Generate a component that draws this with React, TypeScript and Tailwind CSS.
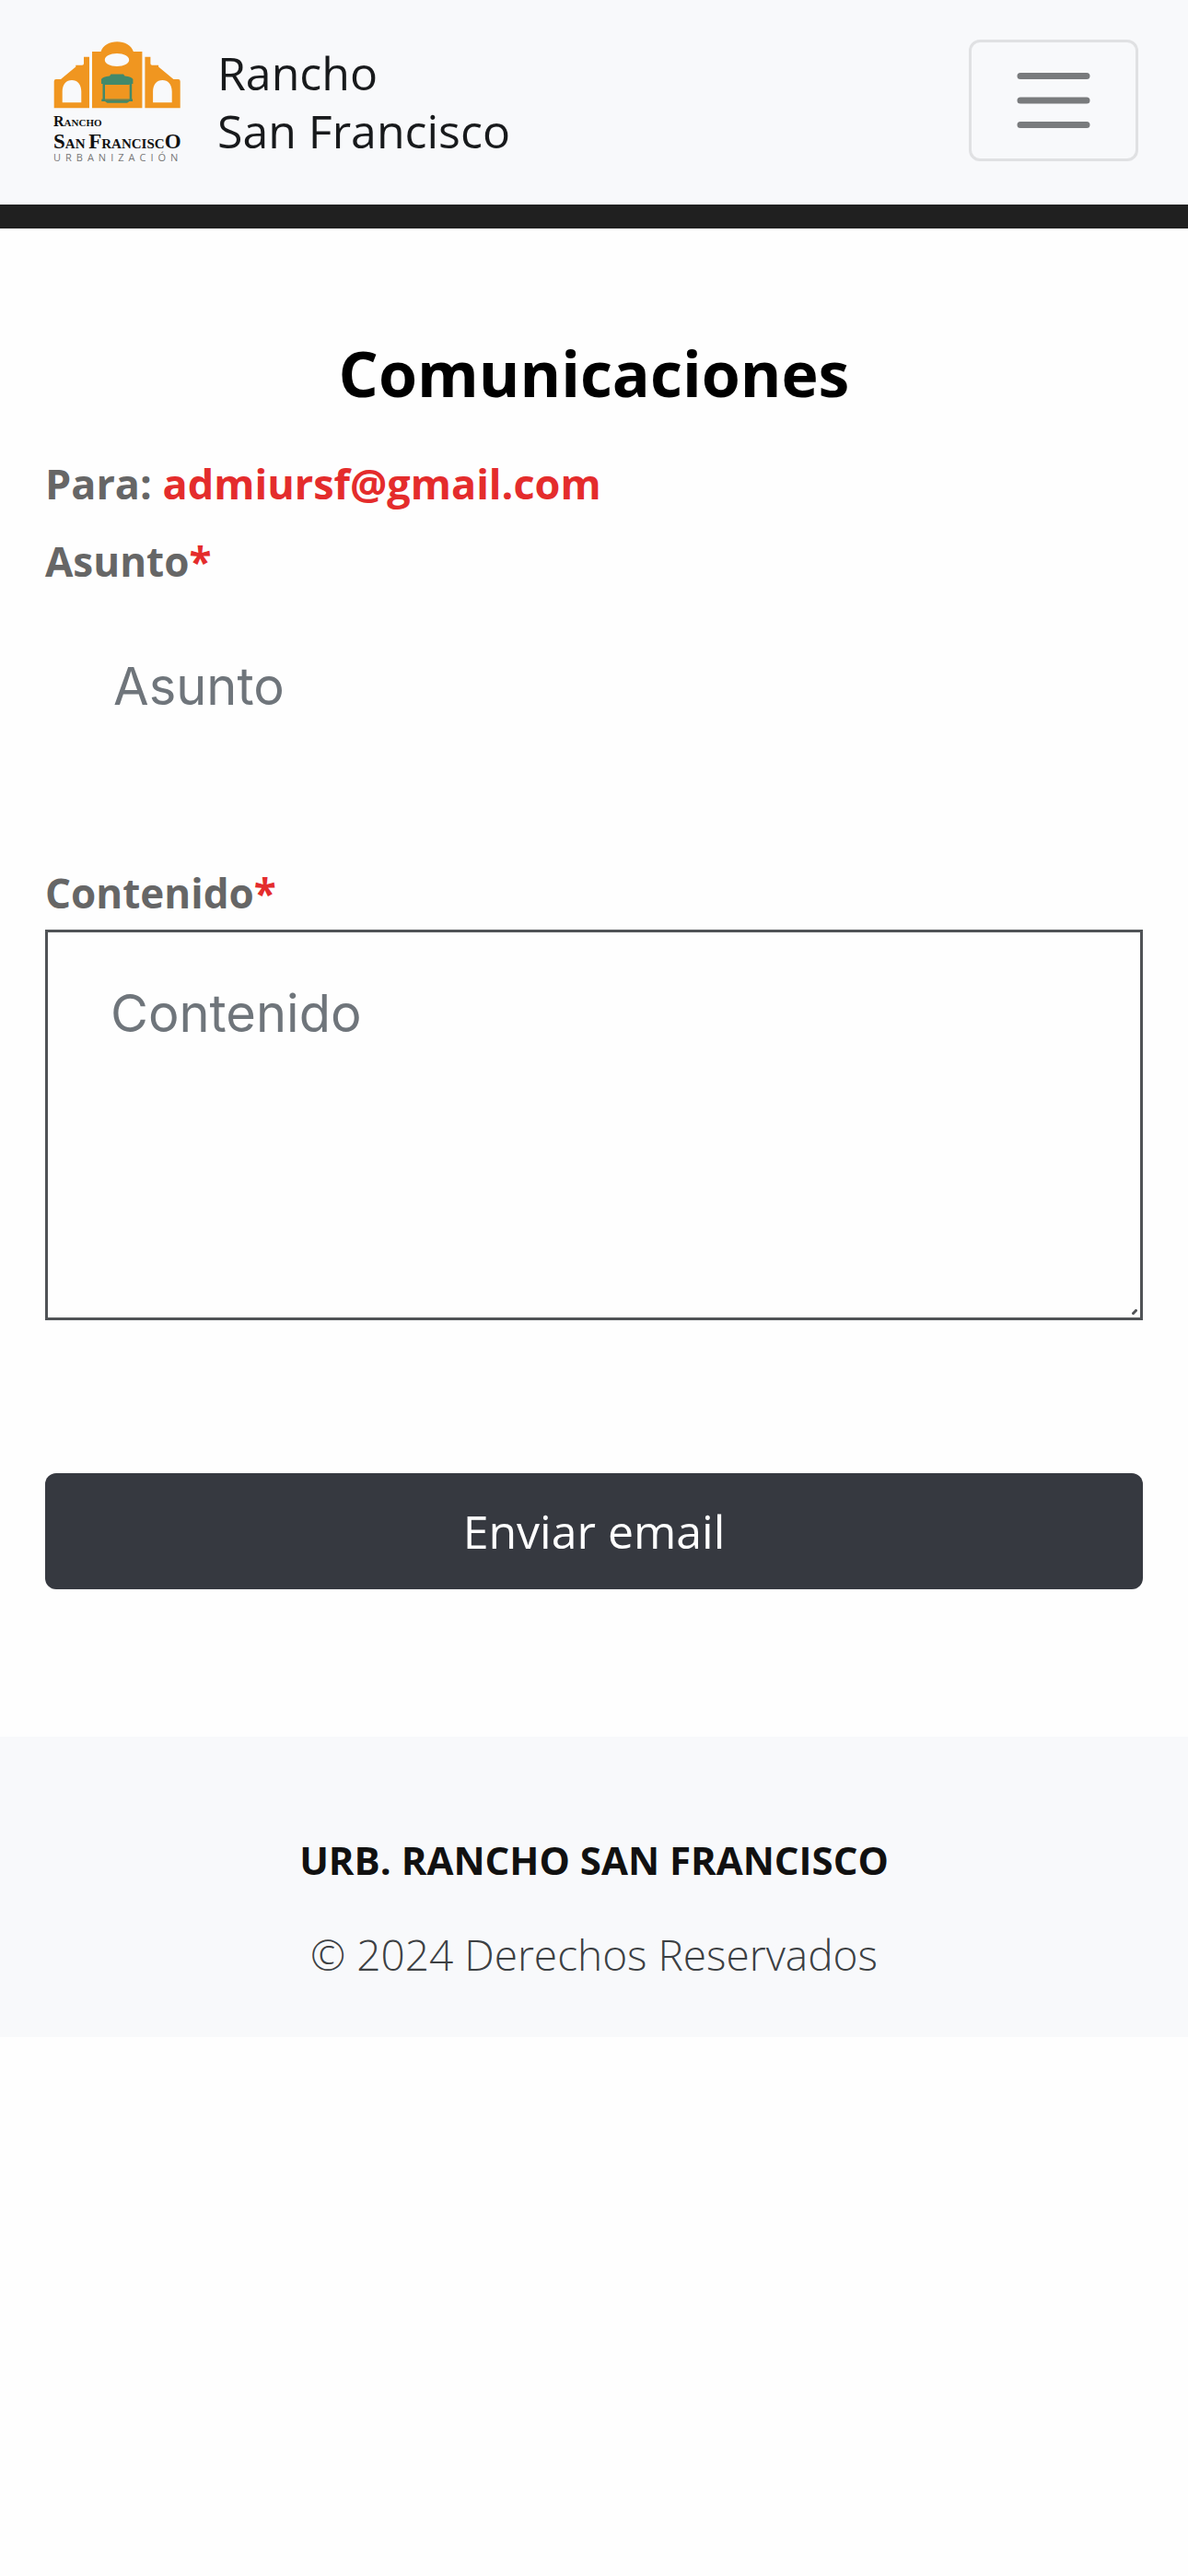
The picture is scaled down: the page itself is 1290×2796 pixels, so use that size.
function GateWing() {
  return (
    <path
      fillRule="evenodd"
      d="M0.7 72.3V43.2Q0.7 41 2.9 41H8L24.3 27.5V25.7H31.2Q33 25.7 33 23.9V16.7H39V72.3ZM9.7 66.3H30.3V54.5C30.3 46.5 26 42 20 42S9.7 46.5 9.7 54.5Z"
    />
  );
}

function Logo() {
  return (
    <svg
      viewBox="0 0 138 132"
      className="h-[132px] w-[138px] shrink-0 overflow-visible"
      role="img"
      aria-label="Rancho San Francisco Urbanización"
    >
      <g fill="#f09620">
        <GateWing />
        <g transform="translate(138.4 0) scale(-1 1)">
          <GateWing />
        </g>
        <path
          fillRule="evenodd"
          d="M42 72.3V11H51.5C54 4 61 0.3 69.2 0.3S84.4 4 86.9 11H96.4V72.3ZM55.8 20C55.8 24 61.5 27 69 27S82.2 24 82.2 20S76.500 13 69 13S55.8 16 55.8 20Z"
        />
      </g>
      <g fill="#42896a">
        <path d="M52 46V41Q53.500 38 61 37.500L62.500 35.500H76L77.500 37.500Q85 38 86.400 41V46H85.200V62.500H86V65H82.500L80 66.800H58.500L56 65H52.300V62.500H53.500V46ZM56 46V62.500H82.700V46Z" />
        <path d="M56 46H82.7V47H56Z" />
      </g>
      <path d="M56 63.7H82" stroke="#8a7a3a" strokeWidth="1" />
      <g fill="#111111" className="font-['Liberation_Serif',serif] font-bold">
        <text x="0" y="92" fontSize="11">
          <tspan fontSize="16">R</tspan>ANCHO
        </text>
        <text x="0" y="116" fontSize="15">
          <tspan fontSize="23">S</tspan>AN <tspan fontSize="23">F</tspan>RANCISC
          <tspan fontSize="23">O</tspan>
        </text>
      </g>
      <text
        x="0"
        y="130"
        fontSize="11"
        fill="#777777"
        className="font-['Open_Sans',sans-serif] tracking-[5px]"
      >
        URBANIZACIÓN
      </text>
    </svg>
  );
}

function Required() {
  return <span className="text-[#e42c2c]">*</span>;
}

export default function App() {
  return (
    <div className="min-h-screen bg-[#fefefe] font-['Open_Sans',sans-serif]">
      <header className="flex items-center justify-between border-b-[26px] border-[#202020] bg-[#f8f9fb] py-[45px] pr-[54px] pl-[58px]">
        <a href="#" className="flex items-center gap-10 text-[50px] leading-[63px] text-[#181a1c]">
          <Logo />
          <span>
            Rancho
            <br />
            San Francisco
          </span>
        </a>
        <button
          type="button"
          aria-label="Abrir menú"
          className="-mt-1 flex h-[132px] w-[184px] items-center justify-center rounded-xl border-[3px] border-[#e0e1e3]"
        >
          <svg viewBox="0 0 80 62" className="h-[62px] w-20" stroke="#797b7d" strokeWidth="7" strokeLinecap="round">
            <path d="M4 4.500H76M4 31H76M4 57.500H76" />
          </svg>
        </button>
      </header>

      <main className="px-[49px] pt-[117px] pb-40">
        <h1 className="text-center text-[68px] leading-[80px] font-bold text-black">Comunicaciones</h1>
        <form className="mt-12 flex flex-col text-[44px] leading-[64px] text-[#666666]">
          <p className="text-[45px] font-bold">
            Para:{" "}
            <a href="mailto:admiursf@gmail.com" className="text-[#e42c2c]">
              admiursf@gmail.com
            </a>
          </p>
          <label htmlFor="asunto" className="mt-5 font-bold">
            Asunto
            <Required />
          </label>
          <input
            id="asunto"
            type="text"
            placeholder="Asunto"
            className="mt-6 h-40 w-full bg-transparent px-[74px] font-['Inter',sans-serif] text-[56px] leading-[80px] text-[#212529] outline-none placeholder:text-[#6f757b]"
          />
          <label htmlFor="contenido" className="mt-28 font-bold">
            Contenido
            <Required />
          </label>
          <div className="relative mt-2">
            <textarea
              id="contenido"
              placeholder="Contenido"
              className="block h-[424px] w-full resize-none border-[3px] border-[#505356] bg-transparent px-[68px] py-12 font-['Inter',sans-serif] text-[56px] leading-[80px] text-[#212529] outline-none placeholder:text-[#6f757b]"
            />
            <svg viewBox="0 0 6 6" className="absolute right-1.5 bottom-1.5 size-1.5" stroke="#505356" strokeWidth="3">
              <path d="M0.500 5.500L5.500 0.500" />
            </svg>
          </div>
          <button
            type="submit"
            className="mt-[166px] h-[126px] w-full rounded-xl bg-[#363940] text-[50px] text-white"
          >
            Enviar email
          </button>
        </form>
      </main>

      <footer className="bg-[#f8f9fb] pt-[104px] pb-[58px] text-center">
        <p className="text-[42px] leading-[60px] font-bold text-[#111111]">URB. RANCHO SAN FRANCISCO</p>
        <p className="mt-10 text-[46px] leading-[64px] font-light text-[#3c4043]">© 2024 Derechos Reservados</p>
      </footer>
    </div>
  );
}
